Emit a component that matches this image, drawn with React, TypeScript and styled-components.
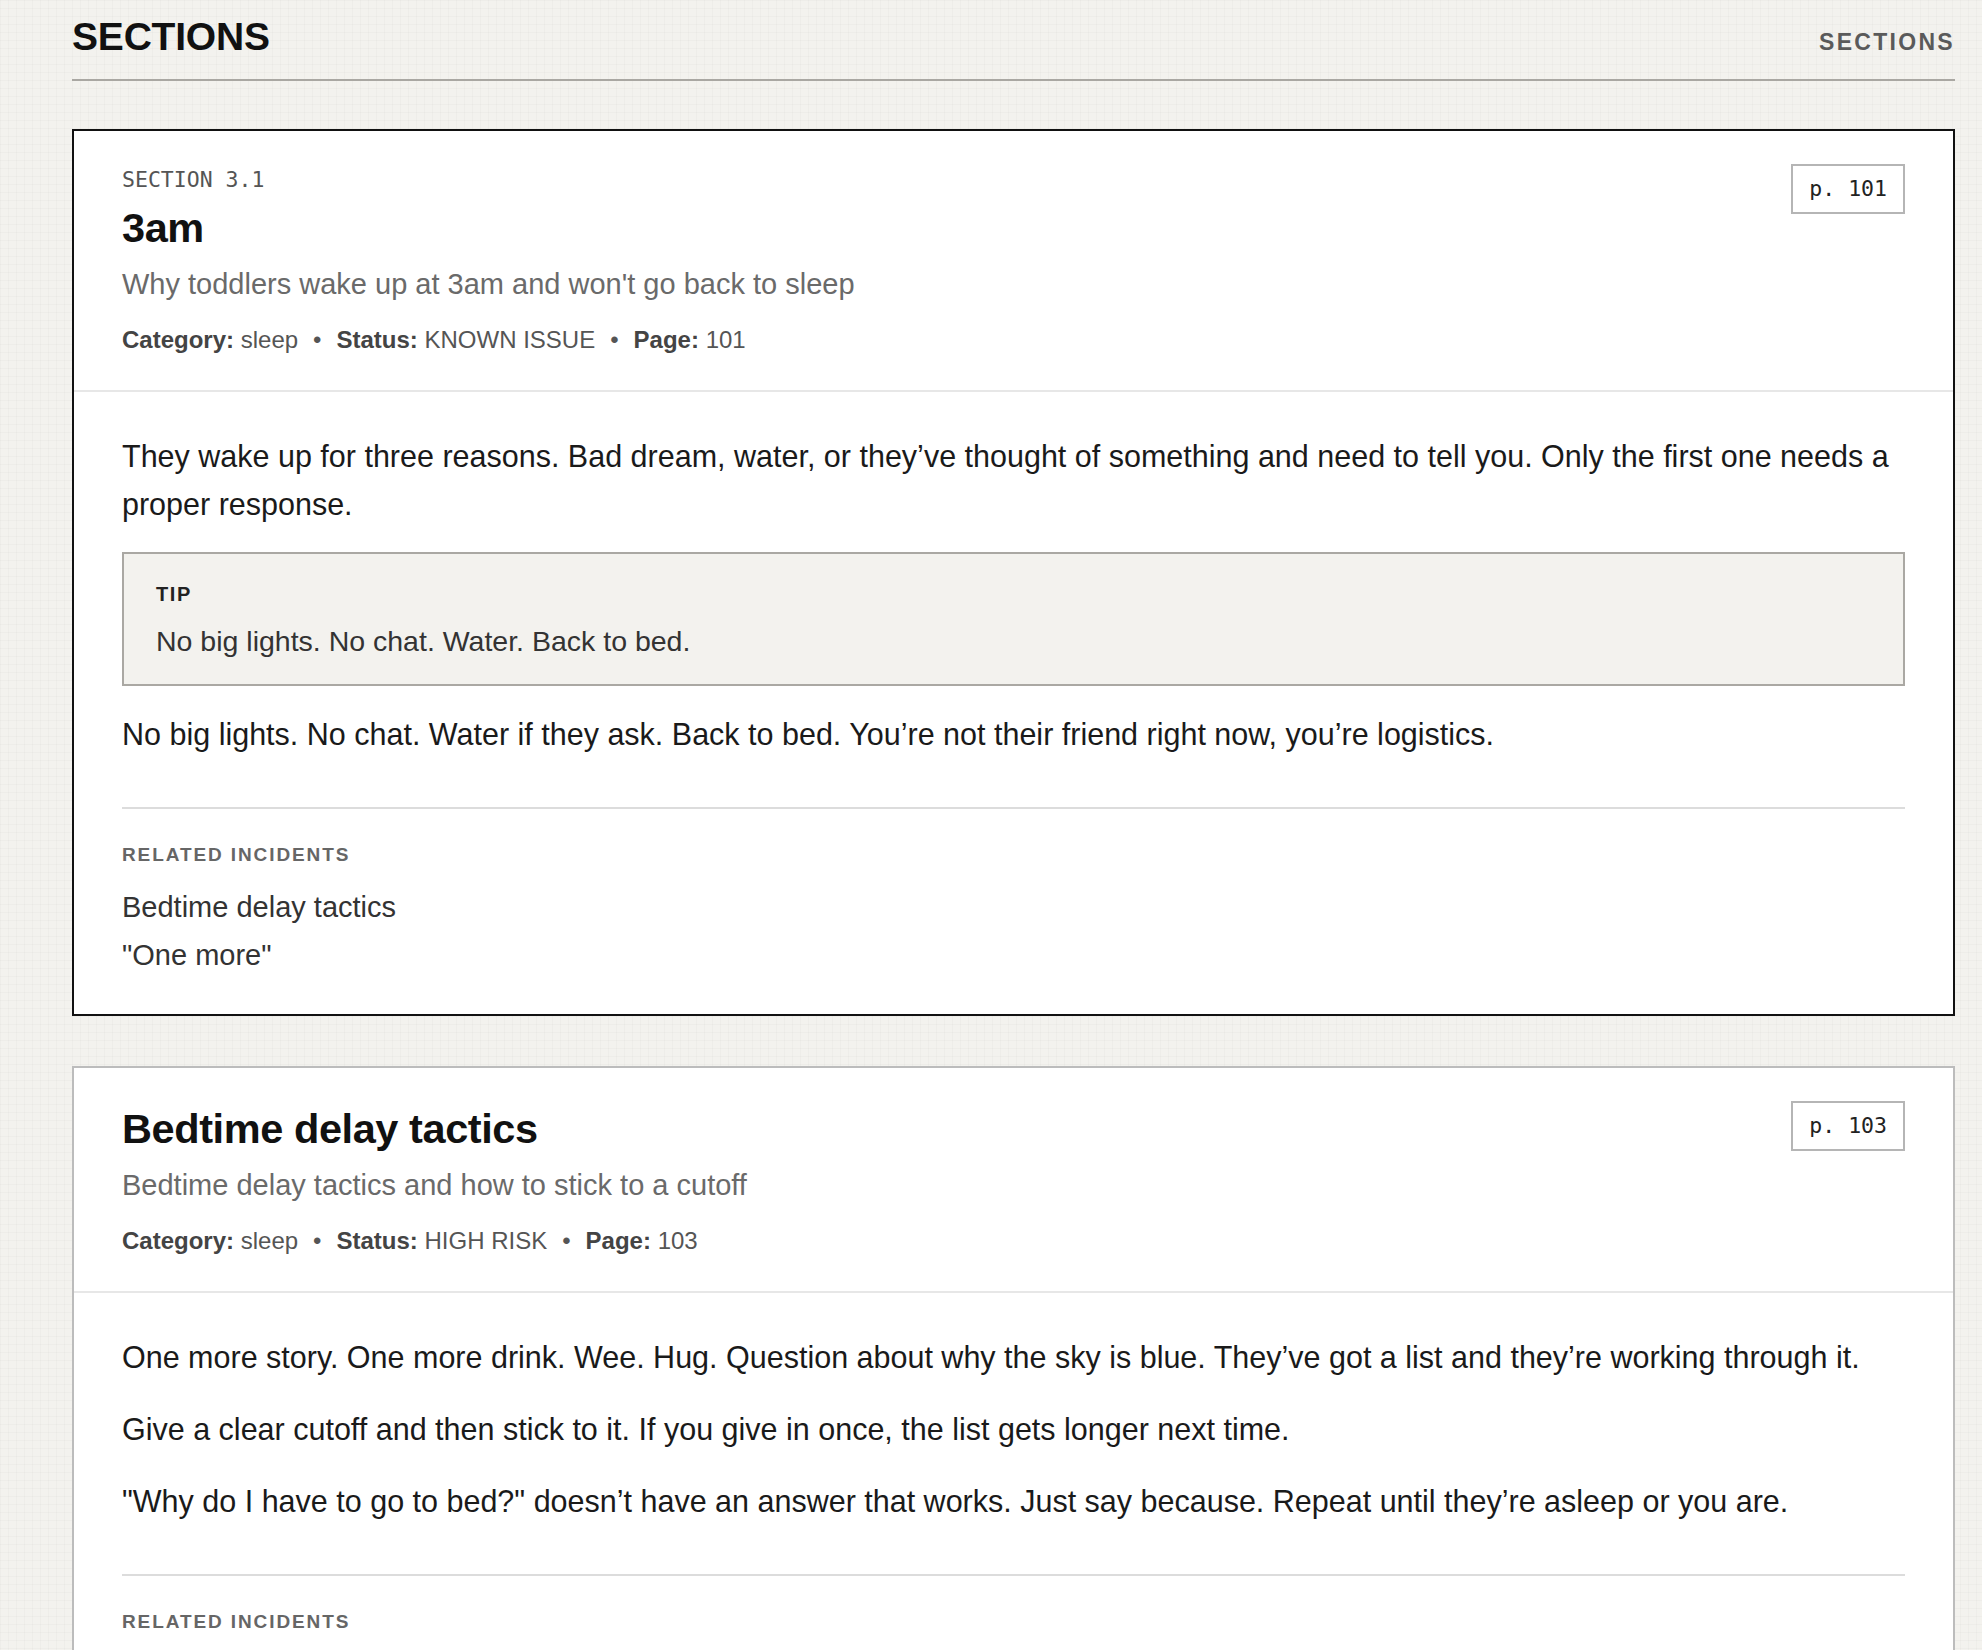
import React from 'react';
import styled, { createGlobalStyle } from 'styled-components';

interface Section {
  id: string;
  label?: string;
  title: string;
  summary: string;
  category: string;
  status: string;
  page: number;
  active?: boolean;
  paragraphs: string[];
  tip?: string;
  afterTip?: string[];
  related: string[];
}

const sections: Section[] = [
  {
    id: '3am',
    label: 'SECTION 3.1',
    title: '3am',
    summary: "Why toddlers wake up at 3am and won't go back to sleep",
    category: 'sleep',
    status: 'KNOWN ISSUE',
    page: 101,
    active: true,
    paragraphs: [
      'They wake up for three reasons. Bad dream, water, or they\u2019ve thought of something and need to tell you. Only the first one needs a proper response.',
    ],
    tip: 'No big lights. No chat. Water. Back to bed.',
    afterTip: [
      'No big lights. No chat. Water if they ask. Back to bed. You\u2019re not their friend right now, you\u2019re logistics.',
    ],
    related: ['Bedtime delay tactics', '"One more"'],
  },
  {
    id: 'bedtime',
    title: 'Bedtime delay tactics',
    summary: 'Bedtime delay tactics and how to stick to a cutoff',
    category: 'sleep',
    status: 'HIGH RISK',
    page: 103,
    paragraphs: [
      'One more story. One more drink. Wee. Hug. Question about why the sky is blue. They\u2019ve got a list and they\u2019re working through it.',
      'Give a clear cutoff and then stick to it. If you give in once, the list gets longer next time.',
      '"Why do I have to go to bed?" doesn\u2019t have an answer that works. Just say because. Repeat until they\u2019re asleep or you are.',
    ],
    related: ['3am', '"One more"'],
  },
];

const GlobalStyle = createGlobalStyle`
  html, body {
    margin: 0;
    padding: 0;
  }
  body {
    background-color: #f3f2ee;
    background-image:
      linear-gradient(rgba(0, 0, 0, 0.018) 1px, transparent 1px),
      linear-gradient(90deg, rgba(0, 0, 0, 0.018) 1px, transparent 1px);
    background-size: 8px 8px;
    font-family: "Liberation Sans", Arial, sans-serif;
    color: #1a1a1a;
  }
`;

const Page = styled.div`
  padding: 17px 27px 60px 72px;
`;

const Header = styled.header`
  display: flex;
  align-items: baseline;
  justify-content: space-between;
  padding-bottom: 23px;
  border-bottom: 2px solid #a9a7a2;
  margin-bottom: 48px;
`;

const PageTitle = styled.h1`
  margin: 0;
  font-size: 39px;
  line-height: 1;
  font-weight: 700;
  color: #111;
  letter-spacing: -0.005em;
`;

const NavLabel = styled.span`
  font-size: 23px;
  font-weight: 700;
  letter-spacing: 0.1em;
  color: #5a5a5a;
`;

const List = styled.div`
  display: flex;
  flex-direction: column;
  gap: 50px;
`;

const Card = styled.article<{ $active?: boolean }>`
  background: #fff;
  border: 2px solid ${(p) => (p.$active ? '#111' : '#bcbcbc')};
`;

const CardHeader = styled.div`
  display: flex;
  justify-content: space-between;
  align-items: flex-start;
  padding: 33px 48px 32px;
  border-bottom: 2px solid #e7e7e7;
`;

const HeaderText = styled.div`
  display: flex;
  flex-direction: column;
`;

const SectionLabel = styled.div`
  font-family: "DejaVu Sans Mono", "Liberation Mono", monospace;
  font-size: 21.5px;
  line-height: 31px;
  color: #555;
  margin-bottom: 5px;
`;

const Title = styled.h2`
  margin: 0 0 7px;
  font-size: 41.5px;
  line-height: 56px;
  font-weight: 700;
  color: #111;
  letter-spacing: -0.01em;
`;

const Summary = styled.p`
  margin: 0 0 17px;
  font-size: 29px;
  line-height: 42px;
  color: #6a6a6a;
`;

const Meta = styled.div`
  font-size: 24px;
  line-height: 36px;
  color: #555;
`;

const MetaKey = styled.b`
  font-weight: 700;
  color: #444;
`;

const Dot = styled.span`
  margin: 0 15px;
  color: #555;
`;

const PageBadge = styled.div`
  flex-shrink: 0;
  font-family: "DejaVu Sans Mono", "Liberation Mono", monospace;
  font-size: 21.5px;
  line-height: 31px;
  padding: 7px 16px 8px;
  border: 2px solid #b5b5b5;
  color: #222;
  background: #fff;
`;

const CardBody = styled.div`
  padding: 40px 48px 35px;
`;

const Paragraph = styled.p`
  margin: 0 0 24px;
  font-size: 30.5px;
  line-height: 48px;
  color: #1a1a1a;
`;

const Tip = styled.div`
  margin: 0 0 24px;
  padding: 25px 32px 21px;
  background: #f3f2ee;
  border: 2px solid #aaa8a3;
`;

const TipLabel = styled.div`
  font-size: 20px;
  line-height: 30px;
  font-weight: 700;
  letter-spacing: 0.08em;
  color: #222;
  margin-bottom: 10px;
`;

const TipText = styled.div`
  font-size: 28.5px;
  line-height: 44px;
  color: #333;
`;

const Related = styled.div`
  margin-top: 49px;
  padding-top: 32px;
  border-top: 2px solid #dcdcdc;
`;

const RelatedLabel = styled.div`
  font-size: 19px;
  line-height: 28px;
  font-weight: 700;
  letter-spacing: 0.1em;
  color: #666;
  margin-bottom: 14px;
`;

const RelatedItem = styled.div`
  font-size: 29px;
  line-height: 48px;
  color: #333;
`;

const SectionCard: React.FC<{ section: Section }> = ({ section }) => (
  <Card $active={section.active}>
    <CardHeader>
      <HeaderText>
        {section.label && <SectionLabel>{section.label}</SectionLabel>}
        <Title>{section.title}</Title>
        <Summary>{section.summary}</Summary>
        <Meta>
          <MetaKey>Category:</MetaKey> {section.category}
          <Dot>•</Dot>
          <MetaKey>Status:</MetaKey> {section.status}
          <Dot>•</Dot>
          <MetaKey>Page:</MetaKey> {section.page}
        </Meta>
      </HeaderText>
      <PageBadge>p. {section.page}</PageBadge>
    </CardHeader>
    <CardBody>
      {section.paragraphs.map((p, i) => (
        <Paragraph key={i}>{p}</Paragraph>
      ))}
      {section.tip && (
        <Tip>
          <TipLabel>TIP</TipLabel>
          <TipText>{section.tip}</TipText>
        </Tip>
      )}
      {section.afterTip?.map((p, i) => (
        <Paragraph key={`a${i}`}>{p}</Paragraph>
      ))}
      <Related>
        <RelatedLabel>RELATED INCIDENTS</RelatedLabel>
        {section.related.map((r) => (
          <RelatedItem key={r}>{r}</RelatedItem>
        ))}
      </Related>
    </CardBody>
  </Card>
);

export default function App() {
  return (
    <>
      <GlobalStyle />
      <Page>
        <Header>
          <PageTitle>SECTIONS</PageTitle>
          <NavLabel>SECTIONS</NavLabel>
        </Header>
        <List>
          {sections.map((s) => (
            <SectionCard key={s.id} section={s} />
          ))}
        </List>
      </Page>
    </>
  );
}
